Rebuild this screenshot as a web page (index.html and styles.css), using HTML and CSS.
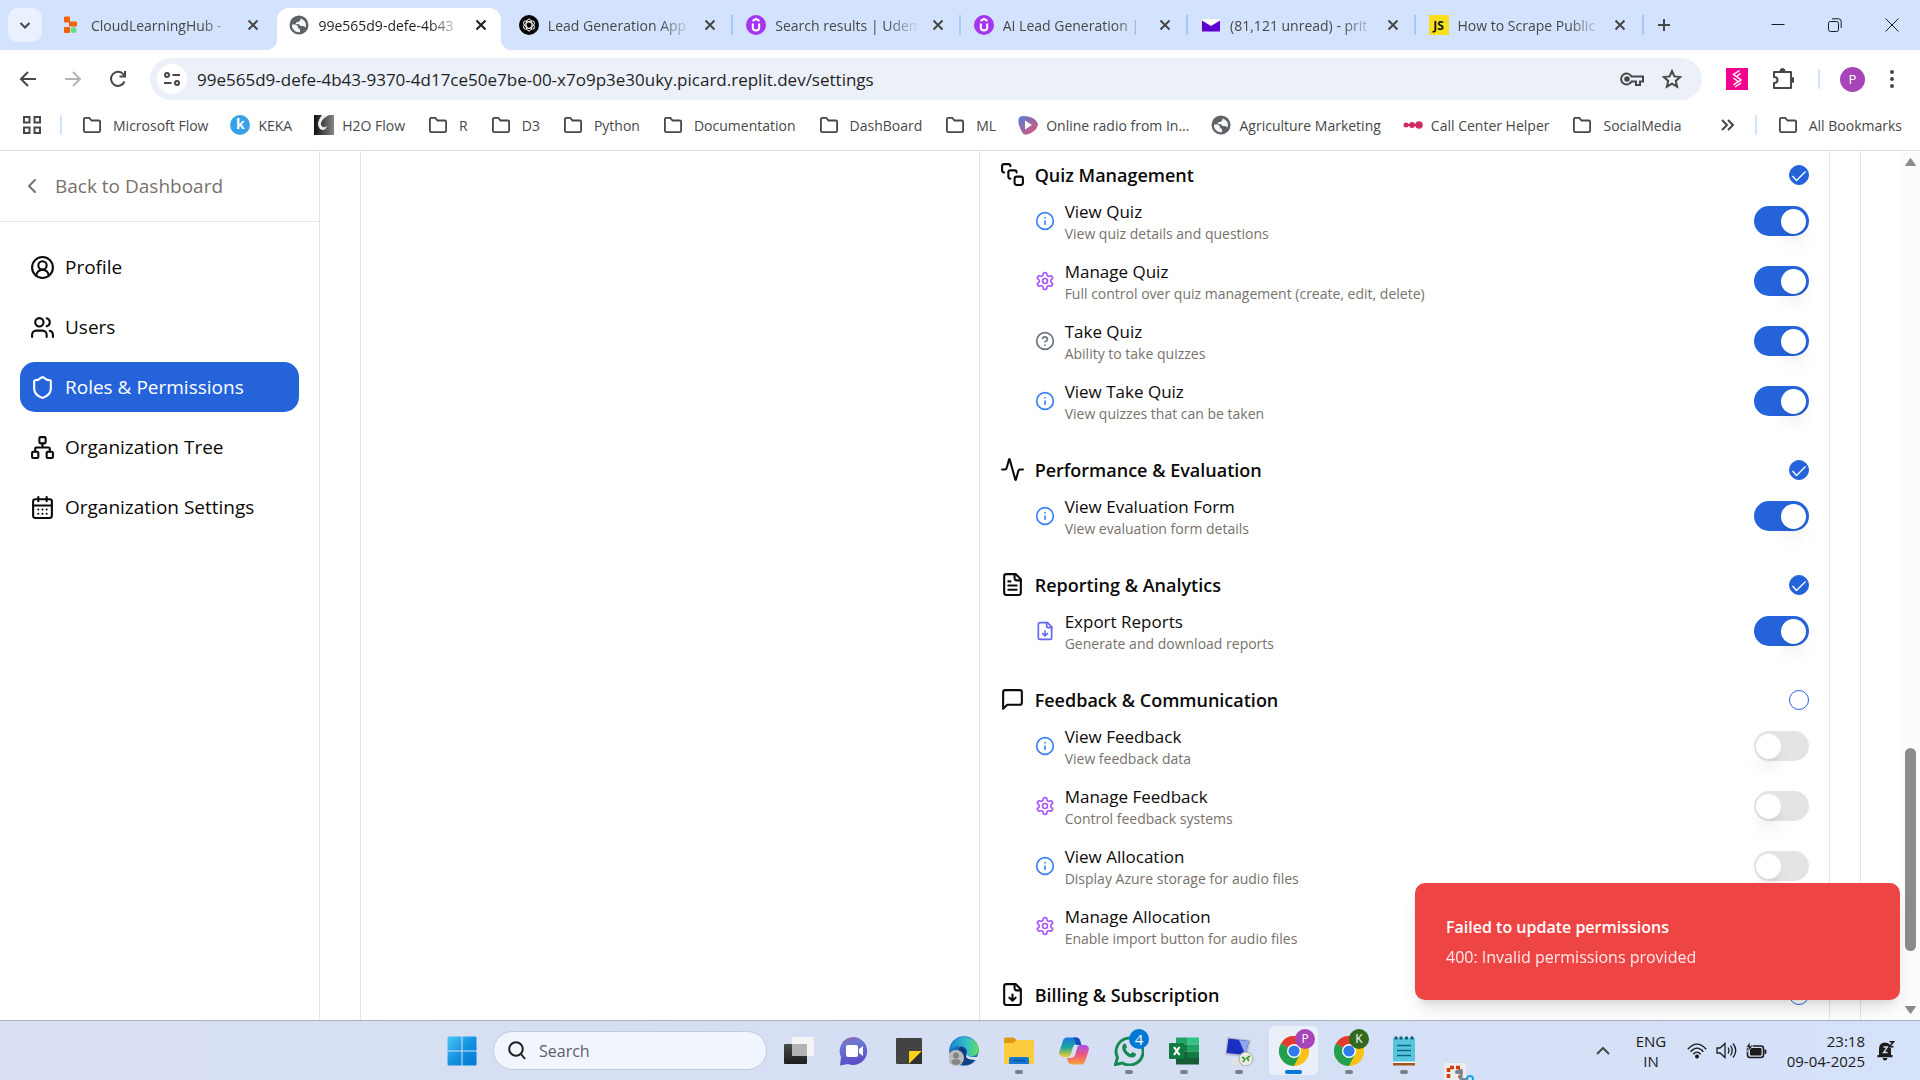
FILE: index.html
```html
<!DOCTYPE html>
<html lang="en">
<head>
<meta charset="utf-8">
<title>Roles &amp; Permissions</title>
<link rel="stylesheet" href="styles.css">
</head>
<body>
<svg class="sprite" aria-hidden="true">
  <symbol id="x" viewBox="0 0 12 12"><path d="M1.5 1.5l9 9M10.500 1.500l-9 9"/></symbol>
  <symbol id="folder" viewBox="0 0 22 20"><path d="M2 3.500Q2 2 3.500 2H8l2.500 3h8Q20 5 20 6.500v10Q20 18 18.500 18h-15Q2 18 2 16.500z"/></symbol>
  <symbol id="globe" viewBox="0 0 20 20"><circle cx="10" cy="10" r="9.500" fill="#5f6368"/><path d="M3 9.500h4l2 2v1.500l2 1v3.300Q5 17.500 3 12zM11.500 3.200V5L9.500 7H7.800L6.500 9l3.500.2 1.500 1.800h3l2 1.500Q18.500 6 11.500 3.200z" fill="#f4f6f8"/></symbol>
  <symbol id="udemy" viewBox="0 0 20 20"><circle cx="10" cy="10" r="10" fill="#a435f0"/><path d="M6.500 5.800L10 3.800l3.500 2M6.800 8.500v4q0 3 3.200 3t3.200-3v-4" fill="none" stroke="#fff" stroke-width="2"/></symbol>
  <symbol id="info" viewBox="0 0 24 24"><circle cx="12" cy="12" r="10"/><path d="M12 16v-4M12 8h.01"/></symbol>
  <symbol id="help" viewBox="0 0 24 24"><circle cx="12" cy="12" r="10"/><path d="M9.090 9a3 3 0 0 1 5.830 1c0 2-3 3-3 3M12 17h.01"/></symbol>
  <symbol id="gear" viewBox="0 0 24 24"><path d="M12.220 2h-.44a2 2 0 0 0-2 2v.18a2 2 0 0 1-1 1.730l-.43.25a2 2 0 0 1-2 0l-.15-.08a2 2 0 0 0-2.730.73l-.22.38a2 2 0 0 0 .73 2.730l.15.1a2 2 0 0 1 1 1.720v.51a2 2 0 0 1-1 1.740l-.15.09a2 2 0 0 0-.73 2.730l.22.38a2 2 0 0 0 2.730.73l.15-.08a2 2 0 0 1 2 0l.43.25a2 2 0 0 1 1 1.730V20a2 2 0 0 0 2 2h.44a2 2 0 0 0 2-2v-.18a2 2 0 0 1 1-1.730l.43-.25a2 2 0 0 1 2 0l.15.08a2 2 0 0 0 2.730-.73l.22-.39a2 2 0 0 0-.73-2.730l-.15-.08a2 2 0 0 1-1-1.740v-.5a2 2 0 0 1 1-1.740l.15-.09a2 2 0 0 0 .73-2.730l-.22-.38a2 2 0 0 0-2.730-.73l-.15.08a2 2 0 0 1-2 0l-.43-.25a2 2 0 0 1-1-1.730V4a2 2 0 0 0-2-2z"/><circle cx="12" cy="12" r="3"/></symbol>
  <symbol id="filedown" viewBox="0 0 24 24"><path d="M15 2H6a2 2 0 0 0-2 2v16a2 2 0 0 0 2 2h12a2 2 0 0 0 2-2V7z"/><path d="M14 2v4a2 2 0 0 0 2 2h4M12 18v-6M9 15l3 3 3-3"/></symbol>
  <symbol id="chrome" viewBox="0 0 30 30"><circle cx="15" cy="15" r="15" fill="#fbc116"/><path d="M15 15L2 7.500A15 15 0 0 1 28 7.500z" fill="#e33b2e"/><path d="M2 7.500A15 15 0 0 0 15 30l6.500-11.500L15 15z" fill="#21a150"/><path d="M15 8.200h13.300A15 15 0 0 1 15 30l5.900-11.600z" fill="#fbc116"/><circle cx="15" cy="15" r="7" fill="#fff"/><circle cx="15" cy="15" r="5.600" fill="#2f7bea"/></symbol>
</svg>

<header class="tabstrip">
  <button class="tabsearch" aria-label="Search tabs"><svg class="line" width="14" height="14" viewBox="0 0 14 14"><path d="M2.500 5l4.500 4.500L11.500 5"/></svg></button>
  <nav class="tabs" aria-label="Tabs">
    <div class="tab"><svg width="20" height="20" viewBox="0 0 20 20"><path d="M2.500 2h5v5h-5zM7.500 7h7v4h-7zM2.500 12.500h5v5h-5z" fill="#f26207" stroke="#f26207" stroke-linejoin="round"/><circle cx="11.500" cy="15" r="3" fill="#5fe08a"/></svg><span class="tabtitle">CloudLearningHub -</span><button class="close" aria-label="Close tab"><svg class="line"><use href="#x"/></svg></button></div>
    <div class="tab active"><svg width="20" height="20"><use href="#globe"/></svg><span class="tabtitle">99e565d9-defe-4b43</span><button class="close" aria-label="Close tab"><svg class="line"><use href="#x"/></svg></button></div>
    <div class="tab"><svg width="20" height="20" viewBox="0 0 20 20"><circle cx="10" cy="10" r="10" fill="#050505"/><g fill="none" stroke="#fff"><ellipse cx="10" cy="10" rx="3" ry="6"/><ellipse cx="10" cy="10" rx="3" ry="6" transform="rotate(60 10 10)"/><ellipse cx="10" cy="10" rx="3" ry="6" transform="rotate(120 10 10)"/></g></svg><span class="tabtitle">Lead Generation App</span><button class="close" aria-label="Close tab"><svg class="line"><use href="#x"/></svg></button></div>
    <div class="tab ruled"><svg width="20" height="20"><use href="#udemy"/></svg><span class="tabtitle">Search results | Udem</span><button class="close" aria-label="Close tab"><svg class="line"><use href="#x"/></svg></button></div>
    <div class="tab ruled"><svg width="20" height="20"><use href="#udemy"/></svg><span class="tabtitle">AI Lead Generation |</span><button class="close" aria-label="Close tab"><svg class="line"><use href="#x"/></svg></button></div>
    <div class="tab ruled"><svg width="20" height="20" viewBox="0 0 20 20"><path d="M1 4h18v12.500H1z" fill="#5f01d1"/><path d="M1 4h18v1.500L10 11 1 5.500z" fill="#fff"/></svg><span class="tabtitle">(81,121 unread) - prit</span><button class="close" aria-label="Close tab"><svg class="line"><use href="#x"/></svg></button></div>
    <div class="tab ruled last"><span class="jsicon">JS</span><span class="tabtitle">How to Scrape Public</span><button class="close" aria-label="Close tab"><svg class="line"><use href="#x"/></svg></button></div>
  </nav>
  <button class="newtab" aria-label="New tab"><svg class="line" width="14" height="14" viewBox="0 0 14 14"><path d="M7 1v12M1 7h12"/></svg></button>
  <div class="wincontrols">
    <button aria-label="Minimize"><svg class="thin" width="14" height="14" viewBox="0 0 14 14"><path d="M.5 6.500h13"/></svg></button>
    <button aria-label="Restore"><svg class="thin" width="14" height="14" viewBox="0 0 14 14"><rect x=".5" y="3.500" width="10" height="10" rx="2"/><path d="M4 .8h6.500Q13.200.8 13.200 3.500V10"/></svg></button>
    <button aria-label="Close"><svg class="thin" width="14" height="14" viewBox="0 0 14 14"><path d="M.5.5l13 13M13.500.5l-13 13"/></svg></button>
  </div>
</header>

<div class="toolbar">
  <button aria-label="Back"><svg class="line" width="18" height="18" viewBox="0 0 18 18"><path d="M17 9H2M9 2L2 9l7 7"/></svg></button>
  <button class="dim" aria-label="Forward"><svg class="line" width="18" height="18" viewBox="0 0 18 18"><path d="M1 9h15M9 2l7 7-7 7"/></svg></button>
  <button aria-label="Reload"><svg class="line" width="18" height="18" viewBox="0 0 18 18"><path d="M15.500 11.500A7 7 0 1 1 14.500 4.500L16 6.500M16 1v5.500h-5.500"/></svg></button>
  <div class="omnibox">
    <button class="siteinfo" aria-label="Site information"><svg class="line" width="18" height="18" viewBox="0 0 18 18"><circle cx="4" cy="5" r="2"/><path d="M9.500 5H17M1 13h7.500"/><circle cx="14" cy="13" r="2"/></svg></button>
    <input class="url" type="text" aria-label="Address" value="99e565d9-defe-4b43-9370-4d17ce50e7be-00-x7o9p3e30uky.picard.replit.dev/settings">
    <button aria-label="Passwords"><svg class="line" width="24" height="16" viewBox="0 0 24 16"><path d="M11.500 5.500A5.500 5.500 0 1 0 11.500 10.500H16V14h4v-3.500h3v-5z"/><circle cx="7" cy="8" r="1.800" fill="#474747"/></svg></button>
    <button aria-label="Bookmark"><svg class="line" width="20" height="20" viewBox="0 0 20 20"><path d="M10 2l2.400 5.400 5.800.6-4.400 3.900 1.300 5.800L10 14.700l-5.100 3 1.300-5.800L1.800 8l5.800-.6z"/></svg></button>
  </div>
  <div class="extensions">
    <button aria-label="Extension"><svg width="22" height="22" viewBox="0 0 22 22"><path d="M0 0h22v22H0z" fill="#f0048d"/><path d="M13.500 2.500L7.500 6.500l3 2M14.500 5.500l-4 3 4.500 3.500-3.500 2.500M7.500 10l4.500 3.500-4.500 3.500M15 15l-6 4" fill="none" stroke="#fff" stroke-width="1.500"/></svg></button>
    <button aria-label="Extensions"><svg class="line" width="22" height="22" viewBox="0 0 22 22"><path d="M2 4h17v16H2v-5q3.500 0 3.500-3T2 9z" stroke-linejoin="round"/><path d="M8 3a2.500 2.500 0 0 1 5 0zM20 9.500a2.500 2.500 0 0 1 0 5z" fill="#474747" stroke-width="1"/></svg></button>
    <span class="rule"></span>
    <button class="avatar" aria-label="Profile">P</button>
    <button aria-label="Menu"><svg width="6" height="20" viewBox="0 0 6 20" fill="#474747"><circle cx="3" cy="3" r="2"/><circle cx="3" cy="10" r="2"/><circle cx="3" cy="17" r="2"/></svg></button>
  </div>
</div>

<nav class="bookmarks" aria-label="Bookmarks">
  <button class="apps" aria-label="Apps"><svg class="line" width="18" height="18" viewBox="0 0 18 18"><path d="M1 1h5.500v5.500H1zM11.500 1H17v5.500h-5.500zM1 11.500h5.500V17H1zM11.500 11.500H17V17h-5.500z"/></svg></button>
  <span class="rule"></span>
  <div class="marks">
    <a href="#"><svg class="line folder"><use href="#folder"/></svg>Microsoft Flow</a>
    <a href="#"><span class="keka">k</span>KEKA</a>
    <a href="#"><svg width="20" height="20" viewBox="0 0 20 20"><defs><linearGradient id="h2o" x1="0" x2="1"><stop stop-color="#111"/><stop offset="1" stop-color="#888"/></linearGradient></defs><path d="M0 0h20v20H0z" fill="url(#h2o)"/><path d="M8 0Q1 9 6 14q5 3 7-3-4 3-6-1-1-5 8-10z" fill="#eee"/></svg>H2O Flow</a>
    <a href="#"><svg class="line folder"><use href="#folder"/></svg>R</a>
    <a href="#"><svg class="line folder"><use href="#folder"/></svg>D3</a>
    <a href="#"><svg class="line folder"><use href="#folder"/></svg>Python</a>
    <a href="#"><svg class="line folder"><use href="#folder"/></svg>Documentation</a>
    <a href="#"><svg class="line folder"><use href="#folder"/></svg>DashBoard</a>
    <a href="#"><svg class="line folder"><use href="#folder"/></svg>ML</a>
    <a href="#"><svg width="20" height="20" viewBox="0 0 20 20"><defs><linearGradient id="radio" x1="0" y1="0" x2="1" y2="1"><stop stop-color="#4f7fd6"/><stop offset="1" stop-color="#f0506e"/></linearGradient></defs><path d="M1 3Q2 0 10 1.500T20 9q0 5-7 9T4 17Q-1 8 1 3z" fill="url(#radio)"/><path d="M7 5.500l7 4.500-7 4.500z" fill="#fff"/></svg>Online radio from In...</a>
    <a href="#"><svg width="20" height="20"><use href="#globe"/></svg>Agriculture Marketing</a>
    <a href="#"><svg width="20" height="20" viewBox="0 0 20 20" fill="#cf2b64"><path d="M2 9h14v2H2z"/><circle cx="3" cy="10" r="2.500"/><circle cx="9" cy="10" r="3"/><circle cx="16" cy="10" r="3.700"/></svg>Call Center Helper</a>
    <a href="#"><svg class="line folder"><use href="#folder"/></svg>SocialMedia</a>
  </div>
  <button class="more" aria-label="More bookmarks"><svg class="line" width="14" height="12" viewBox="0 0 14 12"><path d="M2 1l5 5-5 5M8 1l5 5-5 5"/></svg></button>
  <span class="rule"></span>
  <a class="all" href="#"><svg class="line folder"><use href="#folder"/></svg>All Bookmarks</a>
</nav>

<div class="page">
  <aside class="sidebar">
    <a class="back" href="#"><svg class="lucide"><path d="M15 18l-6-6 6-6"/></svg>Back to Dashboard</a>
    <nav class="menu" aria-label="Settings">
      <a href="#"><svg class="lucide" viewBox="0 0 24 24"><path d="M18 20a6 6 0 0 0-12 0"/><circle cx="12" cy="10" r="4"/><circle cx="12" cy="12" r="10"/></svg>Profile</a>
      <a href="#"><svg class="lucide" viewBox="0 0 24 24"><path d="M16 21v-2a4 4 0 0 0-4-4H6a4 4 0 0 0-4 4v2"/><circle cx="9" cy="7" r="4"/><path d="M22 21v-2a4 4 0 0 0-3-3.870M16 3.130a4 4 0 0 1 0 7.750"/></svg>Users</a>
      <a href="#" class="current" aria-current="page"><svg class="lucide" viewBox="0 0 24 24"><path d="M20 13c0 5-3.500 7.500-7.660 8.950a1 1 0 0 1-.67-.01C7.500 20.500 4 18 4 13V6a1 1 0 0 1 1-1c2 0 4.500-1.200 6.240-2.720a1.170 1.170 0 0 1 1.520 0C14.510 3.810 17 5 19 5a1 1 0 0 1 1 1z"/></svg>Roles &amp; Permissions</a>
      <a href="#"><svg class="lucide" viewBox="0 0 24 24"><rect x="16" y="16" width="6" height="6" rx="1"/><rect x="2" y="16" width="6" height="6" rx="1"/><rect x="9" y="2" width="6" height="6" rx="1"/><path d="M5 16v-3a1 1 0 0 1 1-1h12a1 1 0 0 1 1 1v3M12 12V8"/></svg>Organization Tree</a>
      <a href="#"><svg class="lucide" viewBox="0 0 24 24"><path d="M8 2v4M16 2v4M3 10h18M8 14h.01M12 14h.01M16 14h.01M8 18h.01M12 18h.01M16 18h.01"/><rect x="3" y="4" width="18" height="18" rx="2"/></svg>Organization Settings</a>
    </nav>
  </aside>
  <main class="content">
    <div class="card">
      <div class="roles"></div>
      <div class="panel">
        <section>
          <header><svg class="lucide" viewBox="0 0 24 24"><rect x="14" y="14" width="8" height="8" rx="2"/><path d="M4 10a2 2 0 0 1-2-2V4c0-1.100.9-2 2-2h4a2 2 0 0 1 2 2M10 16a2 2 0 0 1-2-2v-4c0-1.100.9-2 2-2h4a2 2 0 0 1 2 2"/></svg><h2>Quiz Management</h2><input type="checkbox" class="all-check" aria-label="All Quiz Management" checked></header>
          <label class="perm"><svg class="lucide blue"><use href="#info"/></svg><span class="text"><b>View Quiz</b><small>View quiz details and questions</small></span><input type="checkbox" role="switch" class="switch" checked></label>
          <label class="perm"><svg class="lucide purple"><use href="#gear"/></svg><span class="text"><b>Manage Quiz</b><small>Full control over quiz management (create, edit, delete)</small></span><input type="checkbox" role="switch" class="switch" checked></label>
          <label class="perm"><svg class="lucide gray"><use href="#help"/></svg><span class="text"><b>Take Quiz</b><small>Ability to take quizzes</small></span><input type="checkbox" role="switch" class="switch" checked></label>
          <label class="perm"><svg class="lucide blue"><use href="#info"/></svg><span class="text"><b>View Take Quiz</b><small>View quizzes that can be taken</small></span><input type="checkbox" role="switch" class="switch" checked></label>
        </section>
        <section>
          <header><svg class="lucide" viewBox="0 0 24 24"><path d="M22 12h-2.480a2 2 0 0 0-1.930 1.460l-2.350 8.360a.25.25 0 0 1-.48 0L9.240 2.180a.25.25 0 0 0-.48 0l-2.350 8.360A2 2 0 0 1 4.490 12H2"/></svg><h2>Performance &amp; Evaluation</h2><input type="checkbox" class="all-check" aria-label="All Performance &amp; Evaluation" checked></header>
          <label class="perm"><svg class="lucide blue"><use href="#info"/></svg><span class="text"><b>View Evaluation Form</b><small>View evaluation form details</small></span><input type="checkbox" role="switch" class="switch" checked></label>
        </section>
        <section>
          <header><svg class="lucide" viewBox="0 0 24 24"><path d="M15 2H6a2 2 0 0 0-2 2v16a2 2 0 0 0 2 2h12a2 2 0 0 0 2-2V7z"/><path d="M14 2v4a2 2 0 0 0 2 2h4M10 9H8M16 13H8M16 17H8"/></svg><h2>Reporting &amp; Analytics</h2><input type="checkbox" class="all-check" aria-label="All Reporting &amp; Analytics" checked></header>
          <label class="perm"><svg class="lucide indigo"><use href="#filedown"/></svg><span class="text"><b>Export Reports</b><small>Generate and download reports</small></span><input type="checkbox" role="switch" class="switch" checked></label>
        </section>
        <section>
          <header><svg class="lucide" viewBox="0 0 24 24"><path d="M21 15a2 2 0 0 1-2 2H7l-4 4V5a2 2 0 0 1 2-2h14a2 2 0 0 1 2 2z"/></svg><h2>Feedback &amp; Communication</h2><input type="checkbox" class="all-check" aria-label="All Feedback &amp; Communication"></header>
          <label class="perm"><svg class="lucide blue"><use href="#info"/></svg><span class="text"><b>View Feedback</b><small>View feedback data</small></span><input type="checkbox" role="switch" class="switch"></label>
          <label class="perm"><svg class="lucide purple"><use href="#gear"/></svg><span class="text"><b>Manage Feedback</b><small>Control feedback systems</small></span><input type="checkbox" role="switch" class="switch"></label>
          <label class="perm"><svg class="lucide blue"><use href="#info"/></svg><span class="text"><b>View Allocation</b><small>Display Azure storage for audio files</small></span><input type="checkbox" role="switch" class="switch"></label>
          <label class="perm"><svg class="lucide purple"><use href="#gear"/></svg><span class="text"><b>Manage Allocation</b><small>Enable import button for audio files</small></span><input type="checkbox" role="switch" class="switch"></label>
        </section>
        <section>
          <header><svg class="lucide"><use href="#filedown"/></svg><h2>Billing &amp; Subscription</h2><input type="checkbox" class="all-check" aria-label="All Billing &amp; Subscription"></header>
        </section>
      </div>
    </div>
  </main>
  <div class="scrollbar" aria-hidden="true">
    <svg width="13" height="10" viewBox="0 0 13 10"><path d="M6.500 1.500L11.500 8.500h-10z"/></svg>
    <div class="track"><div class="thumb"></div></div>
    <svg width="13" height="10" viewBox="0 0 13 10"><path d="M6.500 8.500L11.500 1.500h-10z"/></svg>
  </div>
  <div class="toast" role="alert">
    <strong>Failed to update permissions</strong>
    <span>400: Invalid permissions provided</span>
  </div>
</div>

<footer class="taskbar">
  <div class="dock">
    <button class="app" aria-label="Start"><svg width="30" height="30" viewBox="0 0 30 30"><defs><linearGradient id="win" x1="0" y1="0" x2="1" y2="1"><stop stop-color="#4cc9f8"/><stop offset=".5" stop-color="#1592e0"/><stop offset="1" stop-color="#0078d4"/></linearGradient></defs><path d="M2 .5h12.500v14H.5V2Q.5.500 2 .5zM15.500.5H28q1.500 0 1.500 1.500v12.500h-14zM.5 15.500h14v14H2Q.5 29.500.5 28zM15.500 15.500h14V28q0 1.500-1.500 1.500H15.500z" fill="url(#win)"/></svg></button>
    <label class="search"><svg class="line" width="18" height="19" viewBox="0 0 18 19"><circle cx="8" cy="8" r="6.800"/><path d="M13 13l4 5"/></svg><input type="text" placeholder="Search" aria-label="Search"></label>
    <button class="app" aria-label="Task view"><svg width="30" height="30" viewBox="0 0 30 30"><defs><linearGradient id="tv" y2="1" x2="0"><stop stop-color="#4a4a4a"/><stop offset="1" stop-color="#1c1c1c"/></linearGradient></defs><rect y="8" width="23" height="20" rx="1" fill="url(#tv)"/><rect x="8" y="1" width="22" height="19" rx="1" fill="#f4f4f4"/><path d="M8 8h15v12H8z" fill="#b4b4b4"/></svg></button>
    <button class="app" aria-label="Chat"><svg width="30" height="30" viewBox="0 0 30 30"><defs><linearGradient id="chat" y2="1" x2=".2"><stop stop-color="#9a62ae"/><stop offset=".3" stop-color="#6a78d0"/><stop offset="1" stop-color="#5a4fc8"/></linearGradient></defs><path d="M15 1A14 14 0 1 1 9 28L1 29.500 2 21A14 14 0 0 1 15 1z" fill="url(#chat)"/><rect x="7" y="9" width="12" height="12" rx="2" fill="#fff"/><path d="M20 13l4-3v10l-4-3z" fill="#fff"/></svg></button>
    <button class="app" aria-label="Sticky notes"><svg width="30" height="30" viewBox="0 0 30 30"><rect x="2" y="2" width="26" height="26" rx="1" fill="#434343"/><path d="M15 15h13L15 28z" fill="#fcd116"/><path d="M28 15v13H15z" fill="#303030"/></svg></button>
    <button class="app" aria-label="Edge"><svg width="30" height="30" viewBox="0 0 30 30"><defs><linearGradient id="edge"><stop stop-color="#1686d0"/><stop offset=".6" stop-color="#35c1c8"/><stop offset="1" stop-color="#62e052"/></linearGradient></defs><circle cx="15" cy="15" r="14.800" fill="#1b6fc0"/><path d="M.5 15A14.800 14.800 0 0 1 29.800 13q.2 7-7.500 7.300-5 0-4.600-2.300Q20 12 12 10 4 10 .5 15z" fill="url(#edge)"/><path d="M10 13Q11 10 14 11q5 3 3 7 1 5 10 4-5 8-13 7-7-4-4-16z" fill="#123f82"/><path d="M18 17.500q-1 4 10 3.500l2-5v8l-3 0q-8 0-10-3z" fill="#d8e0f3"/><circle cx="7" cy="22" r="8" fill="#bcbcbc"/><circle cx="7" cy="19.500" r="3" fill="#858585"/><path d="M2.500 27q0-4 4.500-4t4.500 4q-4 4-9 0z" fill="#858585"/></svg></button>
    <button class="app open" aria-label="File Explorer"><svg width="30" height="30" viewBox="0 0 30 30"><path d="M0 3q0-1.500 1.500-1.500H10l3 3h17V10H0z" fill="#dc9a14"/><path d="M0 7h9l4-3h15q2 0 2 2v22H0z" fill="#fccb3e"/><path d="M5 28v-5q0-2 2-2h16q2 0 2 2v5z" fill="#1378cf"/><path d="M9 24.500h12" stroke="#0a4f96" stroke-width="1.500"/></svg></button>
    <button class="app" aria-label="Copilot"><svg width="30" height="30" viewBox="0 0 30 30"><defs><linearGradient id="co1" y2="1" x2="0"><stop stop-color="#1b75e0"/><stop offset=".5" stop-color="#1ba6a0"/><stop offset="1" stop-color="#f5cf2a"/></linearGradient><linearGradient id="co2" y2="1" x2="0"><stop stop-color="#a84fe8"/><stop offset=".5" stop-color="#f0567c"/><stop offset="1" stop-color="#f7a23a"/></linearGradient></defs><path d="M8 1.500h9q3 0 4 3l1 3.500h-4q-3 0-4 3l-2.500 8q-.7 2-3 2H4q-5-1-3.500-6L4 4.500q1-3 4-3z" fill="url(#co1)"/><path d="M22 28.500h-9q-3 0-4-3L8 22h4q3 0 4-3l2.500-8q.7-2 3-2H26q5 1 3.500 6L26 25.500q-1 3-4 3z" fill="url(#co2)"/><path d="M17 1.500q3 0 4 3l1.500 4.500H17L14.500 1.500z" fill="#1b4fb8"/></svg></button>
    <button class="app open" aria-label="WhatsApp"><svg width="30" height="30" viewBox="0 0 30 30"><path d="M1.500 28.500l2-7A13.500 13.500 0 1 1 8.500 27z" fill="none" stroke="#178a54" stroke-width="3"/><path d="M9 8.500q2-2 3 0l1 2.700-1.500 1.800q1.500 3.500 5 5l2-2 3.500 1.800q0 3.200-3 3.700-5 .5-9-5-3-4-1-8z" fill="#178a54"/></svg><span class="badge num">4</span></button>
    <button class="app open" aria-label="Excel"><svg width="30" height="30" viewBox="0 0 30 30"><path d="M7 1.500h11v7H7z" fill="#21a366"/><path d="M18 1.500h12v7H18z" fill="#33c481"/><path d="M7 8.500h11v7H7z" fill="#107c41"/><path d="M18 8.500h12v7H18z" fill="#21a366"/><path d="M7 15.500h11v13H7z" fill="#185c37"/><path d="M18 15.500h12v6.500H18z" fill="#107c41"/><path d="M18 22h12v6.500H18z" fill="#185c37"/><rect y="7" width="15.500" height="16" rx="1" fill="#107c41"/><path d="M5 11l5.500 8M10.500 11L5 19" stroke="#fff" stroke-width="2.200"/></svg></button>
    <button class="app open" aria-label="Remote Desktop"><svg width="30" height="30" viewBox="0 0 30 30"><path d="M8 23l10-2 4 4q-4 5-14 4z" fill="#e2e2e2"/><path d="M3 1l24 3-4 17L1 19z" fill="#b9bfcb"/><path d="M4.500 2.500L25 5l-3.500 14L2.500 17z" fill="#1a2fc0"/><path d="M15 4l10 1-3.500 14z" fill="#8fa6ee"/><circle cx="22" cy="23" r="7" fill="#e8eee4" stroke="#a5aaa8"/><path d="M18 21l3 2-2 3M26 20l-3 2 2 3" fill="none" stroke="#3c9a28" stroke-width="1.600"/></svg></button>
    <button class="app open focus" aria-label="Chrome, profile P"><svg width="30" height="30"><use href="#chrome"/></svg><span class="badge p">P</span></button>
    <button class="app open" aria-label="Chrome, profile K"><svg width="30" height="30"><use href="#chrome"/></svg><span class="badge k">K</span></button>
    <button class="app open" aria-label="Notepad"><svg width="30" height="30" viewBox="0 0 30 30"><rect x="4" y="2" width="22" height="25" rx="1" fill="#58c5de"/><path d="M4 27h22v2.500H4z" fill="#a4531a"/><path d="M4 25.500h22V27H4z" fill="#f4f4f4"/><path d="M8 9.500h14M8 14.500h14M8 19.500h14" stroke="#0e6788" stroke-width="1.600"/><g fill="#14607c"><circle cx="7" cy="2" r="1.700"/><circle cx="12" cy="2" r="1.700"/><circle cx="17.500" cy="2" r="1.700"/><circle cx="23" cy="2" r="1.700"/></g></svg></button>
    <button class="app open rising" aria-label="Snipping Tool"><svg width="30" height="30" viewBox="0 0 30 30"><rect width="22" height="28" rx="2" fill="#ededed"/><path d="M4.500 15V4.500H16V15" fill="none" stroke="#d83b01" stroke-width="3.500" stroke-dasharray="4 2"/><path d="M17 6v10.500h7" fill="none" stroke="#7a8490" stroke-width="3"/><circle cx="26" cy="16" r="3" fill="none" stroke="#1f9fe8" stroke-width="2"/></svg></button>
  </div>
  <div class="tray">
    <button aria-label="Hidden icons"><svg class="line dark" width="14" height="10" viewBox="0 0 14 10"><path d="M1 8l6-6 6 6"/></svg></button>
    <button class="lang">ENG<br>IN</button>
    <button class="status" aria-label="Network, volume, battery">
      <svg width="20" height="16" viewBox="0 0 20 16"><g fill="none" stroke="#1b1b1b" stroke-width="1.300"><path d="M.8 6.300Q10-4 19.200 6.300M3.600 8.700q6.400-7 12.800 0M6.300 11.200q3.700-4 7.400 0"/></g><circle cx="10" cy="13.500" r="2" fill="#1b1b1b"/></svg>
      <svg width="21" height="17" viewBox="0 0 21 17"><path d="M1 6v5h3l5 4.500V1.500L4 6zM12 5.500q2 3 0 6M14.500 3.500q3.500 5 0 10M17 1.500q5.500 7 0 14" fill="none" stroke="#1b1b1b" stroke-width="1.300"/></svg>
      <svg width="21" height="17" viewBox="0 0 21 17"><rect x="1.500" y="4" width="16" height="11.500" rx="2.500" fill="#d6def2" stroke="#1b1b1b" stroke-width="1.500"/><rect x="4" y="6" width="11.500" height="7.500" rx="1" fill="#1b1b1b"/><path d="M18.500 7.500h1q1 0 1 2.300t-1 2.200h-1z" fill="#1b1b1b"/><path d="M4-.5L0 5.500h2.500L1.500 10 7 4H4z" fill="#1b1b1b" stroke="#d6def2" stroke-width=".8"/></svg>
    </button>
    <button class="clock">23:18<br>09-04-2025</button>
    <button aria-label="Notifications"><svg width="18" height="20" viewBox="0 0 18 20"><path d="M2 15V8Q2 1.500 8 1.500t6 6.500v7zM.5 14h15v2.200H.5zM5.500 17h5q-.5 2.500-2.500 2.500T5.500 17z" fill="#1b1b1b"/><path d="M6.500 6h4l-4 5.500h4M13 1h4l-4 5h4" fill="none" stroke="#d6def2" stroke-width="1.300"/><path d="M12.500.8h4l-4 5h4" fill="none" stroke="#1b1b1b" stroke-width="1.500"/></svg></button>
  </div>
</footer>
</body>
</html>
```
FILE: styles.css
```css
* { box-sizing: border-box; }

body {
  margin: 0;
  height: 100vh;
  overflow: hidden;
  display: flex;
  flex-direction: column;
  font-family: "Open Sans", "Noto Sans", sans-serif;
  font-size: 19px;
  color: #0c0a09;
  background: #fff;
}

button, input { font: inherit; color: inherit; }
button { display: flex; align-items: center; justify-content: center; padding: 0; border: 0; background: none; }
a { color: inherit; text-decoration: none; }
svg { display: block; flex: none; }
.sprite { display: none; }
.line { fill: none; stroke: #474747; stroke-width: 2; }
.thin { fill: none; stroke: #1b1b1b; stroke-width: 1; }
.rule { width: 2px; height: 20px; border-radius: 1px; background: #d3e2fd; flex: none; }

/* Tab strip */
.tabstrip { display: flex; height: 50px; flex: none; background: #d3e2fd; font-size: 14px; color: #474747; }
.tabsearch { width: 34px; height: 34px; margin: 8px 8px; border-radius: 10px; background: #eaf1fe; }
.tabs { display: flex; flex: 0 1 1594px; min-width: 0; }
.tab { position: relative; display: flex; flex: 1; min-width: 0; align-items: center; height: 42px; margin-top: 8px; padding: 0 18px 8px 12px; }
.tab.active { color: #1f1f1f; background: #fff; border-radius: 12px 12px 0 0; margin-right: 6px; padding-right: 14px; }
.tab.active .line { stroke: #1f1f1f; }
.tab.active::before, .tab.active::after { content: ""; position: absolute; bottom: 0; width: 12px; height: 12px; }
.tab.active::before { left: -12px; background: radial-gradient(circle at 0 0, #d3e2fd 12px, #fff 13px); }
.tab.active::after { right: -12px; background: radial-gradient(circle at 100% 0, #d3e2fd 12px, #fff 13px); }
.tab.ruled::before { content: ""; position: absolute; left: -3px; top: 7px; width: 2px; height: 20px; background: #a8c7fa; }
.tab.last::after { content: ""; position: absolute; right: 0; top: 7px; width: 2px; height: 20px; background: #a8c7fa; }
.tabtitle { flex: 1; min-width: 0; margin: 0 13px 0 9px; overflow: hidden; white-space: nowrap; -webkit-mask-image: linear-gradient(90deg, #000 calc(100% - 32px), transparent); mask-image: linear-gradient(90deg, #000 calc(100% - 32px), transparent); }
.close svg { width: 12px; height: 12px; }
.jsicon { width: 20px; height: 20px; background: #f7df1e; color: #111; font-size: 12px; font-weight: 700; line-height: 21px; text-align: center; }
.newtab { width: 40px; }
.wincontrols { display: flex; margin-left: auto; }
.wincontrols button { width: 57px; }

/* Address row */
.toolbar { display: flex; align-items: center; height: 58px; flex: none; padding: 0 9px 0 12px; background: #fff; }
.toolbar > button { width: 32px; margin-right: 13px; }
.toolbar .dim { opacity: .4; }
.omnibox { display: flex; align-items: center; gap: 18px; flex: 1; height: 42px; margin-left: 3px; padding: 0 20px 0 7px; border-radius: 21px; background: #ebf0f9; }
.siteinfo { width: 30px; height: 30px; border-radius: 15px; background: #fff; }
.url { flex: 1; min-width: 0; margin-left: -8px; padding: 0; border: 0; background: none; font-size: 17px; color: #1f1f1f; outline: 0; }
.extensions { display: flex; align-items: center; gap: 24px; padding: 0 16px 0 24px; }
.extensions .rule { height: 20px; margin-right: -4px; }
.avatar { width: 25px; height: 25px; border-radius: 50%; background: #a745b8; color: #fff; font-size: 13px; }

/* Bookmarks row */
.bookmarks { display: flex; align-items: center; height: 43px; flex: none; padding: 0 18px 8px 23px; border-bottom: 1px solid #dcdee2; font-size: 14px; color: #474747; white-space: nowrap; }
.bookmarks a { display: flex; align-items: center; gap: 8px; }
.bookmarks .folder { width: 22px; height: 18px; margin-right: 2px; }
.apps { margin-right: 19px; }
.marks { display: flex; gap: 22px; margin-left: 19px; }
.keka { width: 20px; height: 20px; border-radius: 50%; background: #3aa0e8; color: #fff; font-weight: 700; line-height: 18px; text-align: center; }
.more { margin: 0 21px 0 auto; }
.bookmarks .all { margin-left: 20px; }

/* Web page */
.page { position: relative; display: flex; flex: 1; min-height: 0; }
.lucide { width: 25px; height: 25px; fill: none; stroke: currentColor; stroke-width: 2; stroke-linecap: round; stroke-linejoin: round; }
.sidebar { flex: none; width: 320px; border-right: 1px solid #e4e4e4; }
.back { display: flex; align-items: center; gap: 10px; height: 71px; padding: 0 20px; border-bottom: 1px solid #e4e4e4; color: #78716c; }
.menu { display: flex; flex-direction: column; gap: 10px; padding: 20px; }
.menu a { display: flex; align-items: center; gap: 10px; height: 50px; padding: 0 10px; border-radius: 15px; }
.menu .current { background: #2563db; color: #fff; }
.content { flex: 1; min-width: 0; padding: 0 40px; overflow: hidden; }
.card { display: grid; grid-template-columns: 37fr 51fr; padding-right: 30px; border: solid #e4e4e4; border-width: 0 1px; }
.panel { display: flex; flex-direction: column; gap: 26px; padding: 6px 20px 0; border: solid #e4e4e4; border-width: 0 1px; min-height: calc(100vh - 211px); }
section header { display: flex; align-items: center; gap: 10px; height: 35px; margin-bottom: 4px; }
h2 { flex: 1; margin: 0; font-size: 18px; font-weight: 600; }
.perm { display: flex; align-items: center; gap: 10px; height: 50px; padding-left: 35px; }
.perm + .perm { margin-top: 10px; }
.perm .lucide { width: 20px; height: 20px; }
.blue { color: #3b82f6; }
.purple { color: #a855f7; }
.gray { color: #6b7280; }
.indigo { color: #6366f1; }
.text { display: flex; flex-direction: column; flex: 1; padding-top: 2px; }
.text b { font-size: 17px; font-weight: 400; line-height: 24px; }
.text small { font-size: 14px; line-height: 20px; color: #78716c; }
.all-check, .switch { appearance: none; flex: none; margin: 0; }
.all-check { width: 20px; height: 20px; border: 1px solid #2563db; border-radius: 50%; }
.all-check:checked { background: #2563db url("data:image/svg+xml,%3Csvg xmlns='http://www.w3.org/2000/svg' viewBox='0 0 18 18'%3E%3Cpath d='M2.500 10l4 4.500L15.500 5.500' fill='none' stroke='white' stroke-width='1.400'/%3E%3C/svg%3E"); }
.switch { width: 55px; height: 30px; padding: 3px 2px; border-radius: 15px; background: #e5e4e2; }
.switch::before { content: ""; display: block; width: 25px; height: 25px; border-radius: 50%; background: #fff; box-shadow: 0 12px 18px -4px rgba(0, 0, 0, .1), 0 5px 8px -5px rgba(0, 0, 0, .1); }
.switch:checked { background: #2563db; }
.switch:checked::before { margin-left: 25px; }

.scrollbar { display: flex; flex-direction: column; align-items: center; flex: none; width: 19px; padding: 6px 0 5px; background: #fcfcfc; }
.scrollbar svg { fill: #8b8b8b; stroke: #8b8b8b; stroke-linejoin: round; }
.track { display: flex; flex-direction: column; flex: 1; width: 11px; padding: 581px 0 54px; }
.thumb { flex: 1; border-radius: 6px; background: #8b8b8b; }

.toast { position: absolute; right: 20px; bottom: 20px; display: flex; flex-direction: column; gap: 5px; width: 485px; padding: 32px 31px 30px; border-radius: 10px; background: #ef4444; color: #fff; font-size: 16px; line-height: 25px; box-shadow: 0 12px 18px -4px rgba(0, 0, 0, .12), 0 5px 8px -5px rgba(0, 0, 0, .12); }
.toast strong { font-weight: 600; }
.toast span { opacity: .9; }

/* Taskbar */
.taskbar { display: grid; grid-template-columns: 1fr auto 1fr; flex: none; height: 60px; border-top: 1px solid #a9b1c0; background: linear-gradient(90deg, #d9e0f4, #d5def2 50%, #d6e2fa); overflow: hidden; }
.dock { display: flex; grid-column: 2; align-items: center; }
.app { position: relative; width: 55px; height: 59px; }
.app.open::after { content: ""; position: absolute; left: 24px; bottom: 6px; width: 8px; height: 4px; border-radius: 2px; background: #7b7f8a; }
.app.focus { width: 49px; height: 49px; margin: 0 3px; border-radius: 5px; background: #ebeffa; }
.app.focus::after { left: 16px; bottom: 1px; width: 17px; background: #0078d4; }
.app.rising { align-items: flex-end; }
.app.rising svg { margin-bottom: -13px; }
.badge { position: absolute; top: 8px; right: 7px; width: 20px; height: 20px; border-radius: 50%; color: #fff; font-size: 12px; line-height: 20px; text-align: center; }
.badge.num { font-size: 15px; background: #0078d4; }
.badge.p { top: 3px; right: 3px; background: #a745b8; }
.badge.k { background: #33691e; }
.search { display: flex; align-items: center; gap: 13px; width: 274px; height: 39px; margin: 0 4px; padding: 0 14px; border: 1px solid #c3cbe0; border-radius: 20px; background: #f1f5fd; }
.search .line { stroke: #1f1f1f; }
.search input { flex: 1; min-width: 0; padding: 0; border: 0; background: none; font-size: 16px; outline: 0; }
.search input::placeholder { color: #5c5f66; opacity: 1; }
.tray { display: flex; align-items: center; justify-content: flex-end; padding-right: 25px; font-size: 15px; line-height: 20px; color: #1b1b1b; }
.lang { width: 32px; margin: 0 20px 0 25px; line-height: 20px; }
.status { gap: 9px; }
.clock { justify-content: flex-end; width: 90px; margin: 0 12px 0 8px; text-align: right; line-height: 20px; }
```
